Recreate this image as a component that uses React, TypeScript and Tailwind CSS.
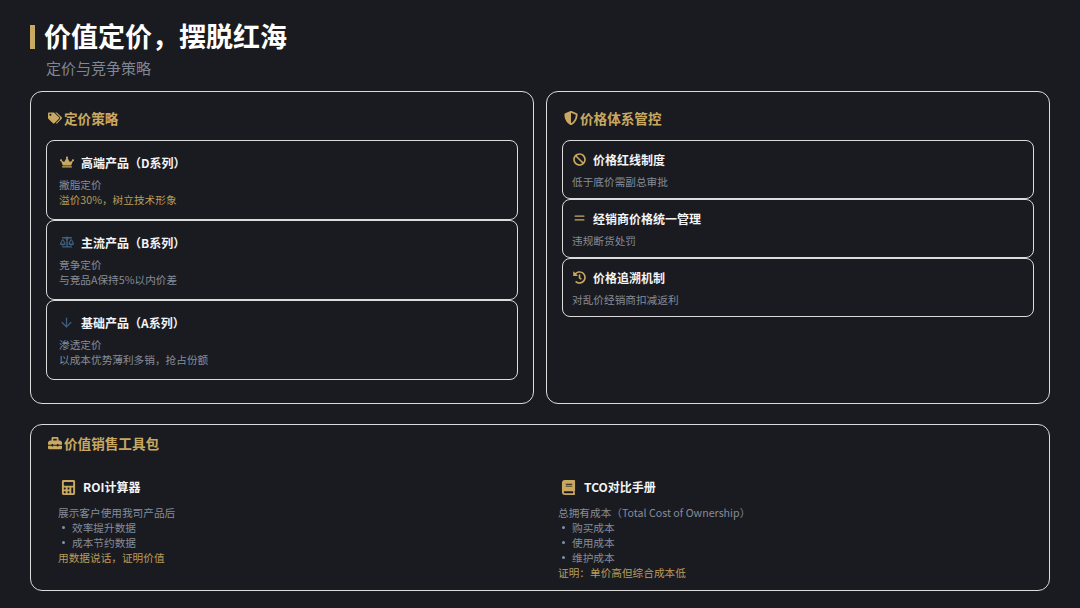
import { FaBalanceScale, FaBan, FaBook, FaCalculator, FaCrown, FaHistory, FaShieldAlt, FaTags, FaToolbox } from "react-icons/fa";
import { ArrowDown, Equal } from "lucide-react";
import type { IconType } from "react-icons";

const font = "font-['Noto_Sans_CJK_SC','Noto_Sans',sans-serif]";

const ThinArrow: IconType = () => <ArrowDown size={15} strokeWidth={2} />;
const ThinEquals: IconType = () => <Equal size={16} strokeWidth={2} />;

function PanelTitle({ icon: Icon, children }: { icon: IconType; children: string }) {
    return (
        <h2 className="flex h-[20px] items-center pl-[2px] text-[13.6px] font-bold text-[#c9a961]">
            <Icon className="text-[14px]" />
            <span className="ml-[2px]">{children}</span>
        </h2>
    );
}

function PricingCard({
    icon: Icon,
    iconColor,
    title,
    lines,
    accent,
}: {
    icon: IconType;
    iconColor: string;
    title: string;
    lines: string[];
    accent?: boolean;
}) {
    return (
        <div className="h-[80px] rounded-[8px] border border-[#dcdcdc] px-[12px] pt-[12px]">
            <div className="flex h-[20px] items-center">
                <span className={`mb-[2px] flex w-[15px] justify-center text-[14px] ${iconColor}`}>
                    <Icon />
                </span>
                <span className="ml-[7px] text-[12px] font-bold text-[#f3f4f6]">{title}</span>
            </div>
            <p className="mt-[4px] text-[10.67px] leading-[15px] text-[#858c9a]">{lines[0]}</p>
            <p className={`text-[10.67px] leading-[15px] ${accent ? "text-[#b89b5c]" : "text-[#858c9a]"}`}>{lines[1]}</p>
        </div>
    );
}

function ControlCard({ icon: Icon, title, text }: { icon: IconType; title: string; text: string }) {
    return (
        <div className="h-[59px] rounded-[8px] border border-[#dcdcdc] px-[9px] pt-[9px]">
            <div className="flex h-[20px] items-center">
                <span className="mb-[2px] flex w-[15px] justify-center text-[13px] text-[#c9a961]">
                    <Icon />
                </span>
                <span className="ml-[6px] text-[12px] font-bold text-[#f3f4f6]">{title}</span>
            </div>
            <p className="mt-[4px] text-[10.67px] leading-[15px] text-[#858c9a]">{text}</p>
        </div>
    );
}

function Bullet({ children }: { children: string }) {
    return (
        <li className="flex h-[15px] items-center pl-[4px] text-[10.67px] text-[#858c9a]">
            <span className="mr-[7px] h-[3px] w-[3px] rounded-full bg-[#7d93ad]" />
            {children}
        </li>
    );
}

export default function App() {
    return (
        <div className={`${font} flex h-[608px] w-[1080px] flex-col overflow-hidden bg-[#1a1b20] px-[30px] pt-[21px]`}>
            {/* Header */}
            <div className="flex h-[32px] items-center">
                <div className="h-[24px] w-[5px] bg-[#c9a961]" />
                <h1 className="mb-[3px] ml-[9px] text-[27px] leading-[32px] font-bold text-white">价值定价，摆脱红海</h1>
            </div>
            <p className="mt-[5px] ml-[16px] text-[15px] leading-[20px] text-[#7f8794]">定价与竞争策略</p>

            <div className="mt-[13px] grid h-[313px] grid-cols-2 gap-[12px]">
                {/* Left Column */}
                <section className="rounded-[12px] border border-[#dcdcdc] px-[15px] pt-[16px]">
                    <PanelTitle icon={FaTags}>定价策略</PanelTitle>
                    <div className="mt-[12px] flex flex-col">
                        <PricingCard icon={FaCrown} iconColor="text-[#c9a961]" title="高端产品（D系列）" lines={["撇脂定价", "溢价30%，树立技术形象"]} accent />
                        <PricingCard icon={FaBalanceScale} iconColor="text-[#3f5f80]" title="主流产品（B系列）" lines={["竞争定价", "与竞品A保持5%以内价差"]} />
                        <PricingCard icon={ThinArrow} iconColor="text-[#3f5f80]" title="基础产品（A系列）" lines={["渗透定价", "以成本优势薄利多销，抢占份额"]} />
                    </div>
                </section>

                {/* Right Column */}
                <section className="rounded-[12px] border border-[#dcdcdc] px-[15px] pt-[16px]">
                    <PanelTitle icon={FaShieldAlt}>价格体系管控</PanelTitle>
                    <div className="mt-[12px] flex flex-col">
                        <ControlCard icon={FaBan} title="价格红线制度" text="低于底价需副总审批" />
                        <ControlCard icon={ThinEquals} title="经销商价格统一管理" text="违规断货处罚" />
                        <ControlCard icon={FaHistory} title="价格追溯机制" text="对乱价经销商扣减返利" />
                    </div>
                </section>
            </div>

            {/* Toolkit */}
            <section className="mt-[20px] h-[167px] rounded-[12px] border border-[#dcdcdc] px-[15px] pt-[8px]">
                <PanelTitle icon={FaToolbox}>价值销售工具包</PanelTitle>
                <div className="mt-[24px] grid grid-cols-2 gap-[12px]">
                    <div className="pl-[12px]">
                        <div className="flex h-[20px] items-center pl-[3px]">
                            <FaCalculator className="text-[15px] text-[#c9a961]" />
                            <span className="ml-[7px] text-[12px] font-bold text-[#f3f4f6]">ROI计算器</span>
                        </div>
                        <p className="mt-[8px] text-[10.67px] leading-[15px] text-[#858c9a]">展示客户使用我司产品后</p>
                        <ul>
                            <Bullet>效率提升数据</Bullet>
                            <Bullet>成本节约数据</Bullet>
                        </ul>
                        <p className="text-[10.67px] leading-[15px] text-[#b89b5c]">用数据说话，证明价值</p>
                    </div>
                    <div className="pl-[12px]">
                        <div className="flex h-[20px] items-center pl-[3px]">
                            <FaBook className="text-[15px] text-[#c9a961]" />
                            <span className="ml-[8px] text-[12px] font-bold text-[#f3f4f6]">TCO对比手册</span>
                        </div>
                        <p className="mt-[8px] text-[10.67px] leading-[15px] text-[#858c9a]">总拥有成本（Total Cost of Ownership）</p>
                        <ul>
                            <Bullet>购买成本</Bullet>
                            <Bullet>使用成本</Bullet>
                            <Bullet>维护成本</Bullet>
                        </ul>
                        <p className="text-[10.67px] leading-[15px] text-[#b89b5c]">证明：单价高但综合成本低</p>
                    </div>
                </div>
            </section>
        </div>
    );
}
